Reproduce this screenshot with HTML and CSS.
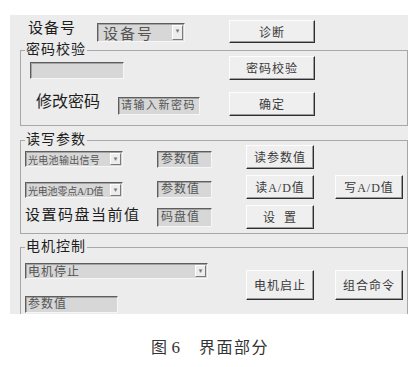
FILE: index.html
```html
<!DOCTYPE html>
<html lang="zh-CN">
<head>
    <meta charset="UTF-8">
    <meta name="viewport" content="width=device-width, initial-scale=1.0">
    <title>界面部分</title>
    <link rel="stylesheet" href="styles.css">
</head>
<body>
    <div class="panel">
        <div class="top-row">
            <span class="label label-device">设备号</span>
            <div class="combo combo-device"><span class="combo-text">设备号</span><span class="combo-btn">▾</span></div>
            <button class="btn btn-wide btn-diag">诊断</button>
        </div>

        <div class="group group-pwd">
            <span class="group-title">密码校验</span>
            <div class="pwd-row row-check">
                <div class="field field-pwd"></div>
                <button class="btn btn-wide btn-check">密码校验</button>
            </div>
            <div class="pwd-row row-new">
                <span class="label label-new">修改密码</span>
                <div class="field field-new">请输入新密码</div>
                <button class="btn btn-wide btn-ok">确定</button>
            </div>
        </div>

        <div class="group group-rw">
            <span class="group-title">读写参数</span>
            <div class="rw-grid">
                <div class="combo combo-small col-1 combo-r1"><span class="combo-text">光电池输出信号</span><span class="combo-btn">▾</span></div>
                <div class="field field-val col-2 val-r1">参数值</div>
                <button class="btn btn-narrow col-3">读参数值</button>

                <div class="combo combo-small col-1 combo-r2"><span class="combo-text">光电池零点A/D值</span><span class="combo-btn">▾</span></div>
                <div class="field field-val col-2 val-r2">参数值</div>
                <button class="btn btn-narrow col-3">读A/D值</button>
                <button class="btn btn-narrow col-4">写A/D值</button>

                <span class="label label-set col-1">设置码盘当前值</span>
                <div class="field field-val field-disk col-2">码盘值</div>
                <button class="btn btn-narrow col-3 btn-set">设&nbsp;&nbsp;置</button>
            </div>
        </div>

        <div class="group group-motor">
            <span class="group-title">电机控制</span>
            <div class="motor-row">
                <div class="motor-left">
                    <div class="combo combo-motor"><span class="combo-text">电机停止</span><span class="combo-btn">▾</span></div>
                    <div class="field field-motor">参数值</div>
                </div>
                <button class="btn btn-tall btn-start">电机启止</button>
                <button class="btn btn-tall btn-combo">组合命令</button>
            </div>
        </div>
    </div>

    <p class="caption">图<span class="fig-no">6</span>　界面部分</p>
</body>
</html>
```

FILE: styles.css
```css
body {
    margin: 0;
    background-color: #ffffff;
    font-family: "Liberation Serif", "Noto Sans CJK SC", serif;
    color: #222;
}
.panel {
    margin: 15px 0 0 10px;
    width: 398px;
    height: 299px;
    background-color: #ececec;
    overflow: hidden;
    padding-top: 5px;
    box-sizing: border-box;
}
.top-row {
    display: flex;
    align-items: flex-start;
    height: 23px;
    padding-left: 18px;
}
.label {
    font-size: 16px;
    line-height: 16px;
    color: #1e1e1e;
    white-space: nowrap;
}
.label-device {
    width: 69px;
    font-size: 15px;
    letter-spacing: 1px;
}

/* sunken boxes */
.field, .combo {
    box-sizing: border-box;
    background-color: #d7d7d7;
    border: 1px solid;
    border-color: #5e5e5e #f6f6f6 #f6f6f6 #5e5e5e;
    box-shadow: inset 1px 1px 0 #a4a4a4;
    color: #555;
    white-space: nowrap;
    overflow: hidden;
}
.combo {
    display: flex;
    align-items: center;
    justify-content: space-between;
}
.combo-text {
    padding-left: 2px;
}
.combo-btn {
    flex-shrink: 0;
    box-sizing: border-box;
    width: 11px;
    height: 12px;
    margin-right: 1px;
    background-color: #ededed;
    border: 1px solid;
    border-color: #fff #7a7a7a #7a7a7a #fff;
    font-family: "DejaVu Sans", sans-serif;
    font-size: 7px;
    line-height: 10px;
    text-align: center;
    letter-spacing: 0;
    color: #777;
}
.combo-device {
    width: 88px;
    height: 19px;
    margin-top: 3px;
    font-size: 15px;
    letter-spacing: 2px;
}
.combo-device .combo-text {
    padding-left: 5px;
}
.combo-device .combo-btn {
    height: 15px;
}

/* raised buttons */
.btn {
    box-sizing: border-box;
    padding: 0;
    background-color: #efefef;
    border: 1px solid;
    border-color: #fdfdfd #2e2e2e #2e2e2e #fdfdfd;
    box-shadow: inset -1px -1px 0 #9c9c9c;
    font-family: "Liberation Serif", "Noto Sans CJK SC", serif;
    font-size: 12px;
    letter-spacing: 1px;
    color: #3a3a3a;
}
.btn-wide {
    width: 86px;
    height: 24px;
}
.btn-diag {
    margin-left: 44px;
    height: 23px;
}
.btn-narrow {
    width: 68px;
    height: 24px;
}
.btn-tall {
    width: 68px;
    height: 30px;
}

/* group boxes */
.group {
    position: relative;
    box-sizing: border-box;
    width: 388px;
    margin-left: 10px;
    border: 1px solid #a8a8a8;
}
.group-title {
    position: absolute;
    top: -9px;
    left: 4px;
    padding: 0 1px;
    background-color: #ececec;
    font-size: 14px;
    line-height: 16px;
    letter-spacing: 1px;
    color: #1e1e1e;
}
.group-pwd {
    margin-top: 7px;
    height: 76px;
}
.pwd-row {
    display: flex;
    align-items: flex-start;
    height: 24px;
}
.row-check {
    margin-top: 5px;
}
.field-pwd {
    width: 94px;
    height: 17px;
    margin: 6px 0 0 9px;
}
.btn-check {
    margin-left: 105px;
}
.row-new {
    margin-top: 12px;
}
.label-new {
    width: 82px;
    margin: 2px 0 0 15px;
    letter-spacing: 0;
}
.field-new {
    width: 82px;
    height: 18px;
    margin-top: 5px;
    font-size: 11px;
    line-height: 15px;
    letter-spacing: 1.5px;
    padding-left: 2px;
}
.btn-ok {
    margin-left: 29px;
}

.group-rw {
    margin-top: 14px;
    height: 94px;
}
.rw-grid {
    display: grid;
    grid-template-columns: 132px 89px 89px 68px;
    grid-template-rows: 24px 24px 24px;
    row-gap: 6px;
    align-items: start;
    justify-items: start;
    padding: 4px 0 0 4px;
}
.col-1 { grid-column: 1; }
.col-2 { grid-column: 2; }
.col-3 { grid-column: 3; }
.col-4 { grid-column: 4; }
.combo-small {
    width: 98px;
    height: 16px;
    font-size: 10px;
}
.combo-r1 {
    margin-top: 6px;
    letter-spacing: 0.3px;
}
.combo-r2 {
    margin-top: 7px;
    letter-spacing: -0.2px;
}
.field-val {
    width: 55px;
    height: 17px;
    font-size: 12px;
    line-height: 15px;
    letter-spacing: 1px;
    padding-left: 3px;
}
.val-r1 {
    margin-top: 6px;
}
.val-r2 {
    margin-top: 6px;
}
.label-set {
    margin-top: 2px;
    font-size: 15px;
    letter-spacing: 1.5px;
}
.field-disk {
    height: 19px;
    margin-top: 3px;
    line-height: 17px;
}

.group-motor {
    margin-top: 13px;
    height: 90px;
}
.motor-row {
    display: flex;
    align-items: flex-start;
}
.motor-left {
    display: flex;
    flex-direction: column;
    gap: 17px;
    padding: 15px 0 0 4px;
}
.combo-motor {
    width: 183px;
    height: 16px;
    font-size: 12px;
    letter-spacing: 1px;
}
.field-motor {
    width: 93px;
    height: 17px;
    font-size: 12px;
    line-height: 15px;
    letter-spacing: 1px;
    padding-left: 2px;
}
.btn-start {
    margin: 22px 0 0 38px;
}
.btn-combo {
    margin: 22px 0 0 21px;
}

.caption {
    margin: 24px 0 0;
    text-align: center;
    font-size: 16px;
    line-height: 20px;
    letter-spacing: 1.5px;
    color: #333;
}
.fig-no {
    padding-left: 3px;
    font-size: 17px;
}
```
